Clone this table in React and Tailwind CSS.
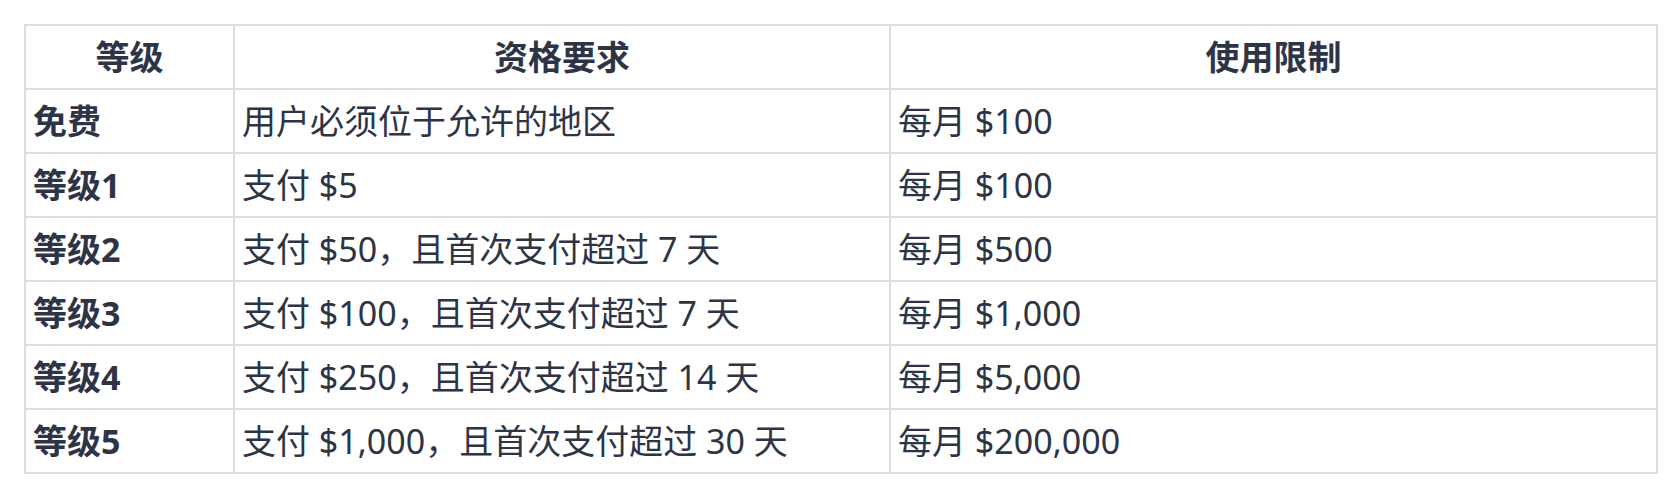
const rows = [
  { level: "免费", req: "用户必须位于允许的地区", limit: "每月 $100" },
  { level: "等级1", req: "支付 $5", limit: "每月 $100" },
  { level: "等级2", req: "支付 $50，且首次支付超过 7 天", limit: "每月 $500" },
  { level: "等级3", req: "支付 $100，且首次支付超过 7 天", limit: "每月 $1,000" },
  { level: "等级4", req: "支付 $250，且首次支付超过 14 天", limit: "每月 $5,000" },
  { level: "等级5", req: "支付 $1,000，且首次支付超过 30 天", limit: "每月 $200,000" },
];

export default function App() {
  return (
    <div
      className="bg-white w-[1680px] h-[496px] p-6 text-[34px] text-[#2d3446]"
      style={{ fontFamily: '"Noto Sans", "Noto Sans CJK SC", sans-serif' }}
    >
      <table className="w-[1632px] table-fixed border-collapse leading-none">
        <colgroup>
          <col className="w-[209px]" />
          <col className="w-[656px]" />
          <col className="w-[767px]" />
        </colgroup>
        <thead>
          <tr className="h-[64px]">
            <th className="border-2 border-[#dcdcdc] px-[7px] font-bold text-center">等级</th>
            <th className="border-2 border-[#dcdcdc] px-[7px] font-bold text-center">资格要求</th>
            <th className="border-2 border-[#dcdcdc] px-[7px] font-bold text-center">使用限制</th>
          </tr>
        </thead>
        <tbody>
          {rows.map((r) => (
            <tr key={r.level} className="h-[64px]">
              <td className="border-2 border-[#dcdcdc] px-[7px] font-bold">{r.level}</td>
              <td className="border-2 border-[#dcdcdc] px-[7px]">{r.req}</td>
              <td className="border-2 border-[#dcdcdc] px-[7px]">{r.limit}</td>
            </tr>
          ))}
        </tbody>
      </table>
    </div>
  );
}
